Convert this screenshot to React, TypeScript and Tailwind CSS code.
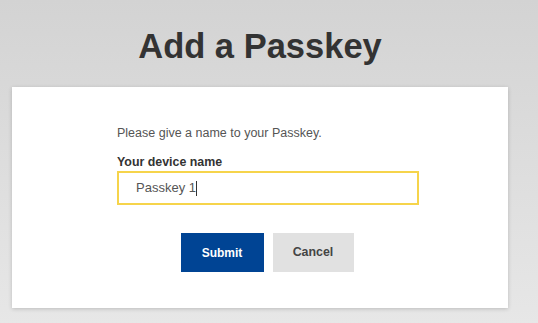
export default function App() {
  return (
    <div
      className="w-[538px] h-[323px] overflow-hidden bg-gradient-to-b from-[#d3d3d3] to-[#e7e7e7]"
      style={{ fontFamily: '"Liberation Sans", Arial, sans-serif' }}
    >
      <div className="w-[520px]">
        <h1 className="pt-[26px] mb-[21px] text-center text-[34.5px] leading-[40px] font-bold text-[#333333]">
          Add a Passkey
        </h1>

        <div className="ml-[12px] w-[496px] h-[221px] bg-white shadow-[0_1px_4px_rgba(0,0,0,0.18)] pt-[37px]">
          <div className="ml-[105px] w-[302px]">
            <p className="text-[12.5px] leading-[18px] text-[#555555]">
              Please give a name to your Passkey.
            </p>
            <label className="block mt-[11px] text-[12.4px] leading-[18px] font-bold text-[#333333]">
              Your device name
            </label>
            <div className="h-[34px] border-2 border-[#f6d44b] pl-[17px] flex items-center text-[13px] leading-[30px] text-[#555555]">
              <span>Passkey 1</span>
              <span className="inline-block w-px h-[15px] bg-[#333333]" />
            </div>
            <div className="mt-[28px] flex justify-center gap-[9px] -ml-[2px]">
              <button className="w-[83px] h-[39px] bg-[#004494] text-white text-[12px] font-bold">
                Submit
              </button>
              <button className="w-[81px] h-[39px] bg-[#e1e1e1] text-[#444444] text-[12.4px] font-bold">
                Cancel
              </button>
            </div>
          </div>
        </div>
      </div>
    </div>
  );
}
